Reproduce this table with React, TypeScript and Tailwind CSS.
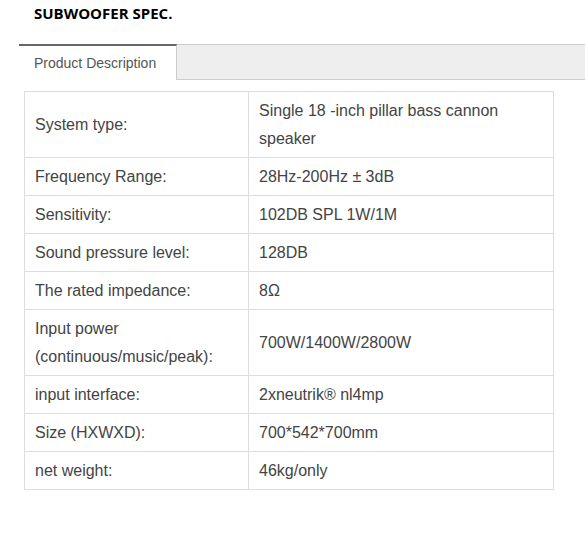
const specs: [string, string][] = [
  ['System type:', 'Single 18 -inch pillar bass cannon speaker'],
  ['Frequency Range:', '28Hz-200Hz ± 3dB'],
  ['Sensitivity:', '102DB SPL 1W/1M'],
  ['Sound pressure level:', '128DB'],
  ['The rated impedance:', '8Ω'],
  ['Input power (continuous/music/peak):', '700W/1400W/2800W'],
  ['input interface:', '2xneutrik® nl4mp'],
  ['Size (HXWXD):', '700*542*700mm'],
  ['net weight:', '46kg/only'],
];

export default function App() {
  return (
    <div className="w-[588px] h-[535px] bg-white font-['Liberation_Sans',Arial,sans-serif]">
      <h2 className="pl-[34px] pt-[3px] text-[15px] leading-[20px] font-bold text-black font-['Open_Sans',sans-serif]">
        SUBWOOFER SPEC.
      </h2>

      {/* tabs */}
      <div className="mt-[21px] ml-[19px] mr-[3px] flex h-[36px]">
        <div className="w-[158px] border-t-2 border-[#666] border-r border-r-[#ccc] bg-white pl-[15px] pt-[7px] text-[14px] text-[#555]">
          Product Description
        </div>
        <div className="flex-1 border-y border-[#ccc] bg-[#eee]" />
      </div>

      <table className="mt-[11px] ml-[24px] w-[530px] border-collapse text-[16px] leading-[28px] text-[#444]">
        <tbody>
          {specs.map(([label, value]) => (
            <tr key={label}>
              <td className="w-[224px] border border-[#ddd] pl-[10px] pr-[10px] pt-[5px] pb-[4px] align-middle">
                {label}
              </td>
              <td className="border border-[#ddd] pl-[10px] pr-[10px] pt-[5px] pb-[4px] align-middle">
                {value}
              </td>
            </tr>
          ))}
        </tbody>
      </table>
    </div>
  );
}
